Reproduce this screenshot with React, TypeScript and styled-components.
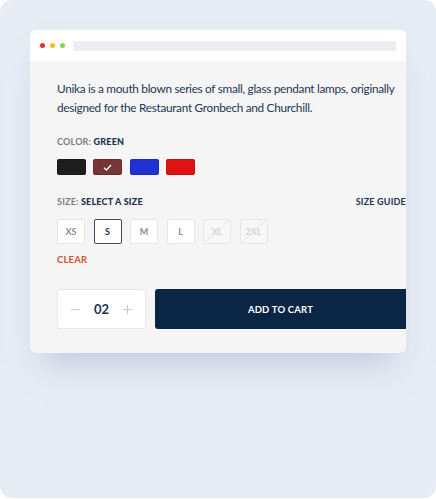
import React, { useState } from 'react'
import styled, { createGlobalStyle } from 'styled-components'

const GlobalStyle = createGlobalStyle`
  html, body {
    margin: 0;
    padding: 0;
    background: #fff;
  }
  body {
    font-family: Lato, 'Liberation Sans', sans-serif;
  }
`

const Panel = styled.div`
  box-sizing: border-box;
  width: 436px;
  height: 498px;
  background: #e7ebf4;
  border-radius: 12px;
  padding: 30px;
`

const Window = styled.div`
  width: 376px;
  border-radius: 6px;
  overflow: hidden;
  background: #f5f5f5;
  box-shadow: 0 22px 30px -12px rgba(160, 175, 205, 0.55);
`

const TitleBar = styled.div`
  display: flex;
  align-items: center;
  height: 31px;
  padding: 0 10px;
  background: #fff;
`

const Dot = styled.span<{ $color: string }>`
  width: 5px;
  height: 5px;
  border-radius: 50%;
  background: ${(p) => p.$color};
  margin-right: 5px;
`

const AddressBar = styled.div`
  flex: 1;
  height: 10px;
  margin-left: 3px;
  background: #ededf2;
`

const Body = styled.div`
  padding: 18px 0 24px 27px;
`

const Description = styled.p`
  margin: 0;
  max-width: 342px;
  font-size: 11.8px;
  letter-spacing: -0.3px;
  line-height: 19px;
  color: #273652;
`

const Label = styled.div<{ $gap?: number }>`
  margin-top: ${(p) => p.$gap ?? 0}px;
  font-size: 9px;
  line-height: 12px;
  font-weight: 700;
  letter-spacing: 0.2px;
  color: #7b7e86;
  text-transform: uppercase;

  b {
    color: #1f3152;
  }
`

const LabelRow = styled.div`
  display: flex;
  justify-content: space-between;
  margin-top: 21px;
`

const GuideLink = styled.span`
  font-size: 9px;
  line-height: 12px;
  font-weight: 700;
  letter-spacing: 0.2px;
  color: #1f3152;
`

const SwatchRow = styled.div`
  display: flex;
  gap: 7.3px;
  margin-top: 11px;
`

const Swatch = styled.button<{ $color: string }>`
  display: flex;
  align-items: center;
  justify-content: center;
  box-sizing: border-box;
  width: 29px;
  height: 16px;
  padding: 0;
  border: 1px solid rgba(0, 0, 0, 0.12);
  border-radius: 2px;
  background: ${(p) => p.$color};
`

const SizeRow = styled.div`
  display: flex;
  gap: 8.5px;
  margin-top: 11px;
`

const SizeBox = styled.button<{ $active?: boolean; $disabled?: boolean }>`
  position: relative;
  box-sizing: border-box;
  width: 28px;
  height: 25px;
  padding: 0;
  border: ${(p) => (p.$active ? '1.5px solid #3c4a66' : '1px solid #e6e6e6')};
  border-radius: 2px;
  background: ${(p) => (p.$disabled ? '#f7f7f7' : '#fff')};
  font-family: Lato, 'Liberation Sans', sans-serif;
  font-size: 9px;
  font-weight: 700;
  color: ${(p) => (p.$active ? '#1f3152' : p.$disabled ? '#d3d3d3' : '#8a8d94')};
  overflow: hidden;
`

const Strike = styled.svg`
  position: absolute;
  inset: 0;
  width: 100%;
  height: 100%;
`

const Clear = styled.div`
  margin-top: 10px;
  font-size: 9.5px;
  line-height: 12px;
  font-weight: 700;
  letter-spacing: 0.2px;
  color: #d5502e;
`

const ActionRow = styled.div`
  display: flex;
  gap: 9px;
  margin-top: 23px;
`

const Qty = styled.div`
  box-sizing: border-box;
  display: flex;
  align-items: center;
  justify-content: space-between;
  width: 89px;
  height: 40px;
  padding: 0 13px;
  background: #fff;
  border: 1px solid #e8e8e8;
  border-radius: 3px;
`

const QtyValue = styled.span`
  font-size: 13px;
  font-weight: 700;
  color: #1f3152;
`

const QtyIcon = styled.svg`
  width: 9px;
  height: 9px;
`

const CartButton = styled.button`
  flex: 1;
  height: 40px;
  border: 0;
  border-radius: 3px 0 0 3px;
  background: #0b2545;
  color: #fff;
  font-family: Lato, 'Liberation Sans', sans-serif;
  font-size: 9.5px;
  font-weight: 700;
  letter-spacing: 0.2px;
`

const colors = [
  { name: 'black', value: '#1e1e1e' },
  { name: 'brown', value: '#773535' },
  { name: 'blue', value: '#2231d3' },
  { name: 'red', value: '#e01212' },
]

const sizes = [
  { label: 'XS' },
  { label: 'S', active: true },
  { label: 'M' },
  { label: 'L' },
  { label: 'XL', disabled: true },
  { label: '2XL', disabled: true },
]

export default function App() {
  const [qty] = useState(2)

  return (
    <>
      <GlobalStyle />
      <Panel>
        <Window>
          <TitleBar>
            <Dot $color="#f0292b" />
            <Dot $color="#fdbb12" />
            <Dot $color="#7bd957" />
            <AddressBar />
          </TitleBar>
          <Body>
            <Description>
              Unika is a mouth blown series of small, glass pendant lamps, originally designed for the Restaurant Gronbech and Churchill.
            </Description>

            <Label $gap={19}>
              Color: <b>Green</b>
            </Label>
            <SwatchRow>
              {colors.map((c, i) => (
                <Swatch key={c.name} $color={c.value} aria-label={c.name}>
                  {i === 1 && (
                    <svg width="9" height="7" viewBox="0 0 9 7">
                      <path d="M1 3.6 L3.4 6 L8 1" fill="none" stroke="#fff" strokeWidth="1.3" />
                    </svg>
                  )}
                </Swatch>
              ))}
            </SwatchRow>

            <LabelRow>
              <Label>
                Size: <b>Select a size</b>
              </Label>
              <GuideLink>SIZE GUIDE</GuideLink>
            </LabelRow>
            <SizeRow>
              {sizes.map((s) => (
                <SizeBox key={s.label} $active={s.active} $disabled={s.disabled}>
                  {s.label}
                  {s.disabled && (
                    <Strike viewBox="0 0 28 25" preserveAspectRatio="none">
                      <line x1="0" y1="25" x2="28" y2="0" stroke="#e2e2e2" strokeWidth="1" />
                    </Strike>
                  )}
                </SizeBox>
              ))}
            </SizeRow>
            <Clear>CLEAR</Clear>

            <ActionRow>
              <Qty>
                <QtyIcon viewBox="0 0 9 9">
                  <line x1="0" y1="4.5" x2="9" y2="4.5" stroke="#c9c9c9" strokeWidth="1" />
                </QtyIcon>
                <QtyValue>{String(qty).padStart(2, '0')}</QtyValue>
                <QtyIcon viewBox="0 0 9 9">
                  <line x1="0" y1="4.5" x2="9" y2="4.5" stroke="#c9c9c9" strokeWidth="1" />
                  <line x1="4.5" y1="0" x2="4.5" y2="9" stroke="#c9c9c9" strokeWidth="1" />
                </QtyIcon>
              </Qty>
              <CartButton>ADD TO CART</CartButton>
            </ActionRow>
          </Body>
        </Window>
      </Panel>
    </>
  )
}
